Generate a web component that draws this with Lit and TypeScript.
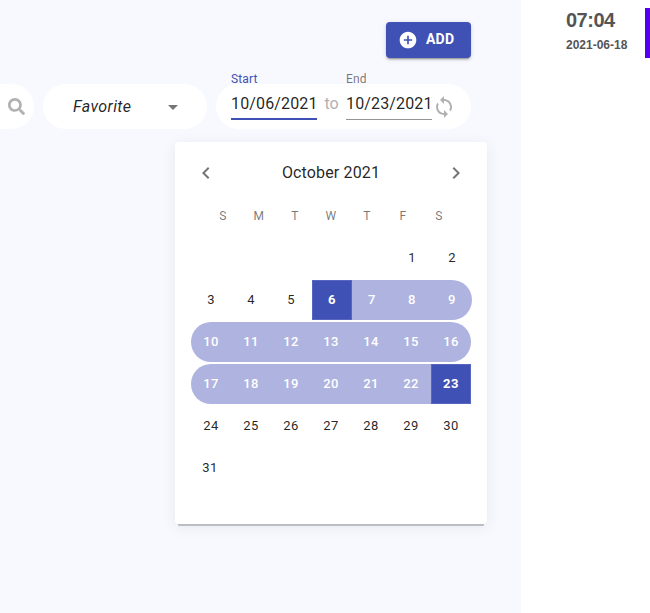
import { LitElement, html, css } from "lit";
import { customElement, property, state } from "lit/decorators.js";
import { classMap } from "lit/directives/class-map.js";

@customElement("range-calendar")
class RangeCalendar extends LitElement {
  @property({ type: Number }) start = 6;
  @property({ type: Number }) end = 23;

  static styles = css`
    :host {
      display: block;
      box-sizing: border-box;
      width: 312px;
      height: 382px;
      padding-top: 16px;
      border-radius: 4px;
      background: #fff;
      color: rgba(0, 0, 0, 0.87);
      box-shadow: 0 5px 0 -3px #bcbdc2, 0 3px 14px 2px rgba(0, 0, 40, 0.055);
    }
    .header {
      display: flex;
      align-items: center;
      justify-content: space-between;
      height: 30px;
      padding: 0 19px;
      font-size: 16px;
      letter-spacing: 0.15px;
    }
    .header svg {
      width: 24px;
      height: 24px;
      fill: #757575;
    }
    .title {
      line-height: 30px;
    }
    .weekdays {
      display: grid;
      grid-template-columns: repeat(7, 36px);
      justify-content: center;
      height: 12px;
      margin: 22px 0 16px;
      line-height: 12px;
      color: rgba(0, 0, 0, 0.54);
      font-size: 12px;
      letter-spacing: 0.4px;
      text-align: center;
    }
    .week {
      display: grid;
      grid-template-columns: repeat(7, 40px);
      width: 280px;
      height: 40px;
      margin: 0 16px 2px;
    }
    .week.from,
    .week.opening {
      margin-left: 17px;
    }
    .day {
      line-height: 40px;
      font-size: 13px;
      text-align: center;
      letter-spacing: 0.43px;
    }
    .from .day.before {
      margin-left: -1px;
      margin-right: 1px;
    }
    .in {
      background: #aeb4df;
      color: #fff;
      font-weight: 500;
    }
    .in.first {
      border-radius: 20px 0 0 20px;
    }
    .in.last {
      border-radius: 0 20px 20px 0;
    }
    .edge,
    .edge.last {
      box-sizing: border-box;
      border: 1px solid #5765be;
      border-radius: 0;
      background: #3f51b5;
      font-weight: 700;
      line-height: 38px;
    }
    .lone {
      margin-left: -1px;
      margin-right: 1px;
    }
  `;

  render() {
    const weeks = Array.from({ length: 6 }, (_, w) =>
      Array.from({ length: 7 }, (_, d) => w * 7 + d - 4)
    );
    return html`
      <div class="header">
        <svg viewBox="0 0 24 24"><path d="M15.41 7.41L14 6l-6 6 6 6 1.41-1.41L10.83 12z" /></svg>
        <span class="title">October 2021</span>
        <svg viewBox="0 0 24 24"><path d="M10 6L8.59 7.41 13.17 12l-4.58 4.59L10 18l6-6z" /></svg>
      </div>
      <div class="weekdays">${[..."SMTWTFS"].map((d) => html`<span>${d}</span>`)}</div>
      ${weeks.map(
        (week) => html`<div
          class=${classMap({
            week: true,
            from: week.includes(this.start),
            opening: week.includes(1),
          })}
        >
          ${week.map((n, i) => {
            const inside = n >= this.start && n <= this.end;
            return html`<span
              class=${classMap({
                day: true,
                in: inside,
                before: n < this.start,
                first: i === 0,
                last: i === 6,
                edge: n === this.start || n === this.end,
                lone: n === 31,
              })}
              >${n > 0 && n < 32 ? n : ""}</span
            >`;
          })}
        </div>`
      )}
    `;
  }
}

@customElement("app-root")
class AppRoot extends LitElement {
  @state() private from = "10/06/2021";
  @state() private to = "10/23/2021";

  static styles = css`
    :host {
      display: flex;
      width: 650px;
      height: 613px;
      overflow: hidden;
      background: #fff;
      font-family: Roboto, sans-serif;
    }
    .main {
      display: flex;
      flex-direction: column;
      width: 521px;
      background: #f8f9fe;
    }
    .add {
      display: flex;
      align-items: center;
      box-sizing: border-box;
      width: 85px;
      height: 36px;
      margin: 22px 0 0 386px;
      padding: 0 0 0 12px;
      border: 0;
      border-radius: 4px;
      background: #3f51b5;
      color: #fff;
      font: 700 14px/34px Roboto, sans-serif;
      letter-spacing: 0.2px;
      box-shadow: 0 3px 1px -2px rgba(0, 0, 0, 0.2), 0 2px 2px rgba(0, 0, 0, 0.14),
        0 1px 5px rgba(0, 0, 0, 0.12);
    }
    .add svg {
      width: 20px;
      height: 20px;
      margin-right: 8px;
      fill: #fff;
    }
    .add span {
      padding-bottom: 2px;
    }
    .filters {
      display: flex;
      gap: 9px;
      height: 45px;
      margin-top: 26px;
    }
    .pill {
      display: flex;
      align-items: center;
      box-sizing: border-box;
      height: 45px;
      border-radius: 23px;
      background: #fff;
    }
    .search {
      width: 34px;
      padding-left: 8px;
      border-radius: 0 23px 23px 0;
    }
    .search svg {
      width: 17px;
      height: 17px;
      fill: #b1b1b1;
    }
    .favorite {
      width: 164px;
      padding: 0 22px 0 30px;
      justify-content: space-between;
      color: rgba(0, 0, 0, 0.87);
      font-size: 16px;
      font-style: italic;
      letter-spacing: 0.4px;
    }
    .favorite svg {
      width: 24px;
      height: 24px;
      fill: #757575;
    }
    .dates {
      width: 255px;
      padding-left: 15px;
      align-items: flex-start;
    }
    .field {
      width: 86px;
      margin-top: -13px;
      color: rgba(0, 0, 0, 0.87);
    }
    .label {
      height: 16px;
      color: rgba(0, 0, 0, 0.54);
      font-size: 12px;
      line-height: 16px;
      letter-spacing: 0.11px;
    }
    .value {
      box-sizing: border-box;
      height: 33px;
      border-bottom: 1px solid #949494;
      font-size: 16px;
      line-height: 34px;
      letter-spacing: 0.15px;
      white-space: nowrap;
    }
    .active .label {
      color: #3f51b5;
    }
    .active .value {
      border-bottom: 2px solid #3f51b5;
    }
    .to {
      width: 29px;
      color: #b1b1b1;
      font-size: 16px;
      line-height: 40px;
      text-align: center;
    }
    .dates > svg {
      width: 24px;
      height: 24px;
      margin-top: 11px;
      fill: #b1b1b1;
    }
    range-calendar {
      margin: 13px 0 0 175px;
    }
    .side {
      display: flex;
      justify-content: space-between;
      width: 129px;
      height: 50px;
      margin-top: 8px;
      box-sizing: border-box;
      padding-left: 45px;
      border-right: 5px solid #5600f0;
      color: #555;
    }
    .time {
      font: 700 20px/25px "Liberation Sans", Arial, sans-serif;
      letter-spacing: -0.5px;
    }
    .date {
      font: 700 12px/24px "Liberation Sans", Arial, sans-serif;
    }
  `;

  render() {
    return html`
      <div class="main">
        <button class="add">
          <svg viewBox="0 0 24 24">
            <path d="M12 2C6.48 2 2 6.48 2 12s4.48 10 10 10 10-4.48 10-10S17.52 2 12 2zm5 11h-4v4h-2v-4H7v-2h4V7h2v4h4v2z" />
          </svg>
          <span>ADD</span>
        </button>
        <div class="filters">
          <div class="pill search">
            <svg viewBox="0 0 512 512">
              <path d="M505 442.700L405.300 343c-4.500-4.500-10.600-7-17-7H372c27.600-35.300 44-79.700 44-128C416 93.100 322.900 0 208 0S0 93.100 0 208s93.100 208 208 208c48.300 0 92.700-16.400 128-44v16.300c0 6.400 2.500 12.500 7 17l99.700 99.700c9.400 9.400 24.600 9.400 33.900 0l28.300-28.300c9.400-9.400 9.400-24.600.1-34zM208 336c-70.700 0-128-57.200-128-128 0-70.700 57.200-128 128-128 70.700 0 128 57.200 128 128 0 70.700-57.200 128-128 128z" />
            </svg>
          </div>
          <div class="pill favorite">
            <span>Favorite</span>
            <svg viewBox="0 0 24 24"><path d="M7 10l5 5 5-5z" /></svg>
          </div>
          <div class="pill dates">
            <div class="field active">
              <div class="label">Start</div>
              <div class="value">${this.from}</div>
            </div>
            <span class="to">to</span>
            <div class="field">
              <div class="label">End</div>
              <div class="value">${this.to}</div>
            </div>
            <svg viewBox="0 0 24 24">
              <path d="M12 4V1L8 5l4 4V6c3.310 0 6 2.690 6 6 0 1.010-.25 1.970-.7 2.800l1.460 1.460C19.540 15.030 20 13.570 20 12c0-4.420-3.580-8-8-8zm0 14c-3.310 0-6-2.690-6-6 0-1.010.25-1.970.7-2.800L5.240 7.740C4.460 8.970 4 10.430 4 12c0 4.420 3.580 8 8 8v3l4-4-4-4v3z" />
            </svg>
          </div>
        </div>
        <range-calendar></range-calendar>
      </div>
      <div class="side">
        <div>
          <div class="time">07:04</div>
          <div class="date">2021-06-18</div>
        </div>
      </div>
    `;
  }
}
